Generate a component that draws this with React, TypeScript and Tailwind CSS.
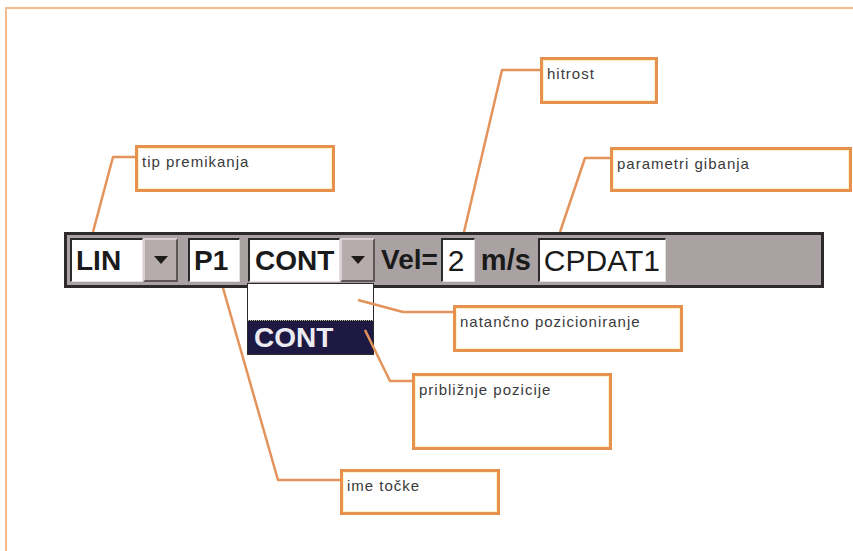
import React from "react";

const Callout = ({ left, top, w, h, text }: { left: number; top: number; w: number; h: number; text: string }) => (
  <div
    className="absolute border-[3px] border-[#e6914d] bg-white shadow-[inset_0_0_0_1px_#fff1cc] px-[4px] pt-[5px] text-[15px] leading-[18px] tracking-[1px] text-[#3a3a3a]"
    style={{ left, top, width: w, height: h, fontFamily: '"Liberation Sans", Arial, sans-serif' }}
  >
    {text}
  </div>
);

const Arrow = () => (
  <div className="w-[35px] h-full bg-[#b6acad] border-t-2 border-l-2 border-[#d9d1d1] border-b-2 border-r-2 border-b-[#5e5556] border-r-[#5e5556] flex items-center justify-center">
    <svg width="14" height="8" viewBox="0 0 14 8">
      <polygon points="0,0 14,0 7,8" fill="#1e1a1a" />
    </svg>
  </div>
);

const Field = ({ w, children, bold = true, pl = 4, size = 28 }: { w: number; children: React.ReactNode; bold?: boolean; pl?: number; size?: number }) => (
  <div
    className={`h-full bg-white border-t-2 border-l-2 border-[#2b2b2b] border-b border-r border-b-[#e6e0e0] border-r-[#e6e0e0] flex items-center leading-none text-[#1a1a1a] ${bold ? "font-bold" : "font-normal"}`}
    style={{ width: w, paddingLeft: pl, fontSize: size }}
  >
    {children}
  </div>
);

export default function App() {
  return (
    <div
      className="relative w-[853px] h-[551px] bg-white overflow-hidden"
      style={{ fontFamily: '"Liberation Sans", Arial, sans-serif' }}
    >
      {/* frame */}
      <div className="absolute left-[5px] top-[7px] right-0 bottom-0 border-t-2 border-l-2 border-[#f5bb8c]" />

      {/* leader lines */}
      <svg className="absolute left-0 top-0" width="853" height="551" viewBox="0 0 853 551">
        <g fill="none" stroke="#e4935a" strokeWidth="2.5" strokeLinejoin="round">
          <polyline points="93,232 113,157 135,157" />
          <polyline points="464,232 502,70 540,70" />
          <polyline points="560,232 585,158 610,158" />
          <polyline points="223,288 278,480 340,480" />
        </g>
      </svg>

      {/* callouts */}
      <Callout left={135} top={145} w={200} h={47} text="tip premikanja" />
      <Callout left={540} top={57} w={118} h={47} text="hitrost" />
      <Callout left={610} top={147} w={242} h={45} text="parametri gibanja" />
      <Callout left={453} top={305} w={230} h={47} text="natančno pozicioniranje" />
      <Callout left={412} top={373} w={200} h={77} text="približnje pozicije" />
      <Callout left={340} top={469} w={160} h={46} text="ime točke" />

      {/* toolbar */}
      <div className="absolute left-[64px] top-[232px] w-[760px] h-[56px] bg-[#aaa1a2] border-[3px] border-[#2e2a2b] flex items-center pl-[3px]">
        <div className="flex h-[44px]">
          <Field w={73}>LIN</Field>
          <Arrow />
        </div>
        <div className="ml-[10px] h-[44px]">
          <Field w={52}>P1</Field>
        </div>
        <div className="ml-[8px] flex h-[44px]">
          <Field w={92} pl={5}>CONT</Field>
          <Arrow />
        </div>
        <div className="ml-[6px] text-[28px] font-bold leading-none text-[#1a1a1a]">Vel=</div>
        <div className="ml-[3px] h-[44px]">
          <Field w={34} bold={false} pl={5} size={30}>2</Field>
        </div>
        <div className="ml-[6px] text-[29px] font-bold leading-none text-[#1a1a1a]">m/s</div>
        <div className="ml-[7px] h-[44px]">
          <Field w={128} bold={false} pl={4} size={30}>CPDAT1</Field>
        </div>
      </div>

      {/* dropdown list */}
      <div className="absolute left-[247px] top-[283px] w-[127px] h-[72px] border border-[#2a2a2a] flex flex-col">
        <div className="h-[36px] bg-white" />
        <div className="flex-1 bg-[#1d1942] border-t border-dotted border-[#c9c48a] flex items-center pl-[6px] text-[28px] font-bold leading-none text-[#ecebf2]">
          CONT
        </div>
      </div>

      {/* leader lines over the list */}
      <svg className="absolute left-0 top-0 pointer-events-none" width="853" height="551" viewBox="0 0 853 551">
        <g fill="none" stroke="#e4935a" strokeWidth="2.5" strokeLinejoin="round">
          <polyline points="358,300 403,312 453,312" />
          <polyline points="365,330 390,381 412,381" />
        </g>
      </svg>
    </div>
  );
}
